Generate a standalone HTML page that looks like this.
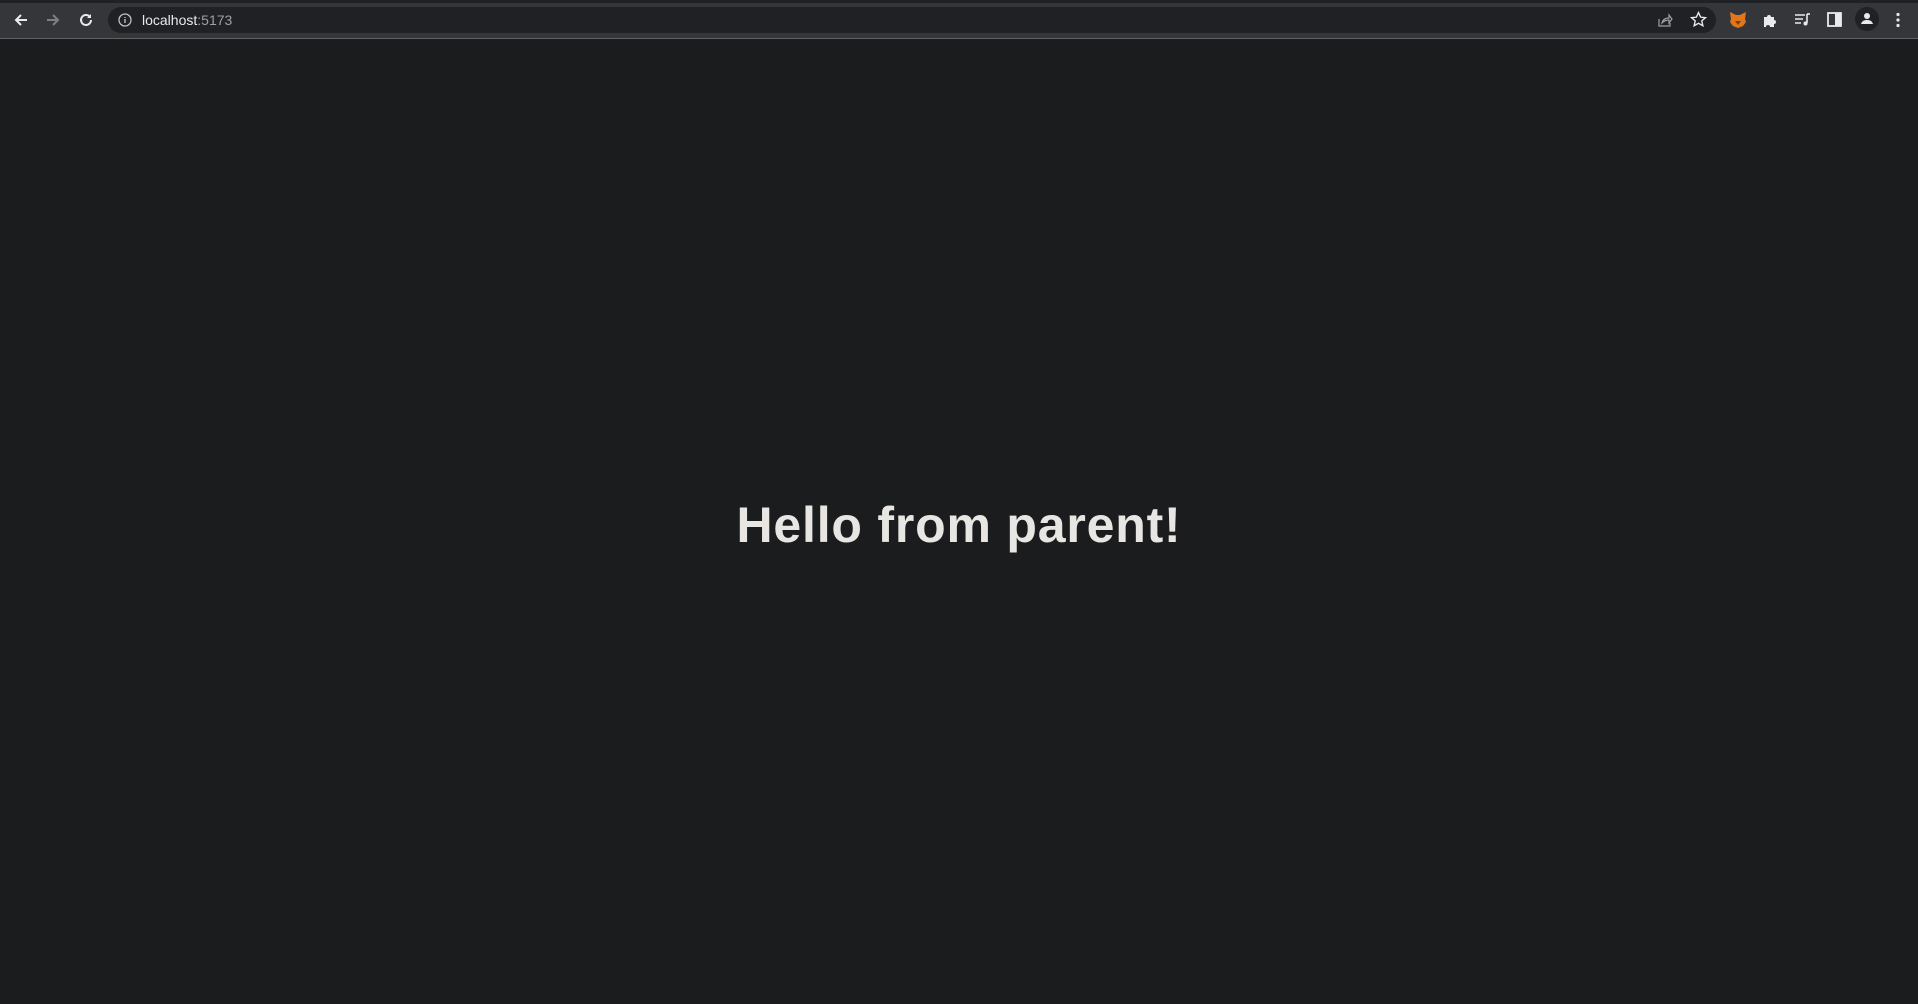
<!DOCTYPE html>
<html><head><meta charset="utf-8"><style>
html,body{margin:0;padding:0;width:1918px;height:1004px;overflow:hidden;background:#1b1c1e;font-family:"Liberation Sans",sans-serif}
.tb{position:absolute;left:0;top:0;width:1918px;height:38px;background:#35363a;border-bottom:1px solid #5f6063}
.top{position:absolute;left:0;top:0;width:1918px;height:3px;background:#202124}
.omni{position:absolute;left:108px;top:7px;width:1608px;height:26px;border-radius:13px;background:#202124}
.url{position:absolute;left:142px;top:12px;font-size:14px;color:#e8eaed}
.url span{color:#9aa0a6}
svg{position:absolute}
h1{position:absolute;left:0;width:1918px;top:490px;margin:0;text-align:center;font-size:50px;font-weight:bold;color:#e8e6e3;letter-spacing:0.8px;line-height:70px}
</style></head><body>
<div class="tb"></div><div class="top"></div>
<svg style="left:12px;top:11px" width="18" height="18" viewBox="0 0 18 18"><path d="M15 9H4M9 4L4 9l5 5" stroke="#e8eaed" stroke-width="2" fill="none"/></svg>
<svg style="left:44px;top:11px" width="18" height="18" viewBox="0 0 18 18"><path d="M3 9h11M9 4l5 5-5 5" stroke="#7c7f84" stroke-width="2" fill="none"/></svg>
<svg style="left:77px;top:11px" width="18" height="18" viewBox="0 0 18 18"><path d="M14 9a5 5 0 1 1-1.5-3.6" stroke="#e8eaed" stroke-width="2" fill="none"/><path d="M14 3v4h-4z" fill="#e8eaed"/></svg>
<div class="omni"></div>
<svg style="left:118px;top:13px" width="14" height="14" viewBox="0 0 14 14"><circle cx="7" cy="7" r="6" stroke="#bdc1c6" stroke-width="1.3" fill="none"/><path d="M7 6v4M7 4v1" stroke="#bdc1c6" stroke-width="1.4"/></svg>
<div class="url">localhost<span>:5173</span></div>
<svg style="left:1657px;top:12px" width="16" height="16" viewBox="0 0 16 16"><path d="M2 7v7h11v-3M5 11c1-4 4-5 7-5V3l3 4-3 4V8c-3 0-5 1-7 3z" stroke="#9aa0a6" stroke-width="1.2" fill="none"/></svg>
<svg style="left:1690px;top:11px" width="17" height="17" viewBox="0 0 16 16"><path d="M8 1.5l2 4.3 4.5.5-3.4 3 1 4.6L8 11.6 3.9 13.9l1-4.6-3.4-3 4.5-.5z" stroke="#e8eaed" stroke-width="1.3" fill="none"/></svg>
<svg style="left:1729px;top:11px" width="18" height="17" viewBox="0 0 18 17"><path d="M1 1l6 3h4l6-3-1 7 1 3-3 4-5 2-5-2-3-4 1-3z" fill="#e2761b"/><path d="M6 10l3 4 3-4" fill="#763d16"/></svg>
<svg style="left:1762px;top:12px" width="16" height="16" viewBox="0 0 16 16"><path d="M2 5h3a2 2 0 1 1 4 0h3v3a2 2 0 1 1 0 4v3H8a2 2 0 1 0-4 0H2z" fill="#e8eaed"/></svg>
<svg style="left:1794px;top:12px" width="17" height="15" viewBox="0 0 17 15"><path d="M1 3h10M1 7h8M1 11h6" stroke="#e8eaed" stroke-width="1.6"/><path d="M13 2v9" stroke="#e8eaed" stroke-width="1.6"/><circle cx="11.5" cy="11.5" r="2" fill="#e8eaed"/><path d="M13 2h3" stroke="#e8eaed" stroke-width="1.6"/></svg>
<svg style="left:1827px;top:12px" width="15" height="15" viewBox="0 0 15 15"><rect x="1" y="1" width="13" height="13" fill="none" stroke="#e8eaed" stroke-width="1.8"/><rect x="8" y="1" width="6" height="13" fill="#e8eaed"/></svg>
<svg style="left:1855px;top:7px" width="24" height="24" viewBox="0 0 24 24"><circle cx="12" cy="12" r="12" fill="#202124"/><circle cx="12" cy="9" r="3" fill="#e8eaed"/><path d="M6 17c1-3 3-4 6-4s5 1 6 4z" fill="#e8eaed"/></svg>
<svg style="left:1895px;top:12px" width="6" height="16" viewBox="0 0 6 16"><circle cx="3" cy="2.5" r="1.6" fill="#e8eaed"/><circle cx="3" cy="8" r="1.6" fill="#e8eaed"/><circle cx="3" cy="13.5" r="1.6" fill="#e8eaed"/></svg>
<h1>Hello from parent!</h1>
</body></html>
